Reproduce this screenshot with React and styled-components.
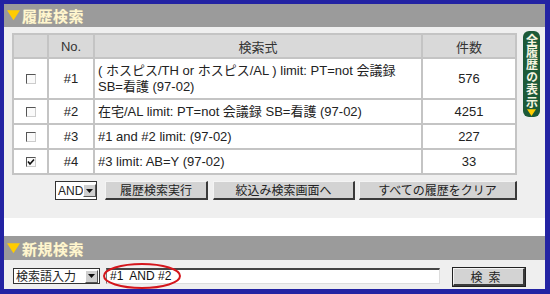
import styled, { createGlobalStyle } from 'styled-components'

const GlobalStyle = createGlobalStyle`
  html, body {
    margin: 0;
    padding: 0;
    background: #ffffff;
  }
  * {
    box-sizing: border-box;
  }
`

const Frame = styled.div`
  width: 550px;
  height: 294px;
  border-style: solid;
  border-color: #2323a3;
  border-width: 4px 5px 5px 4px;
  background: #ffffff;
  display: flex;
  flex-direction: column;
  font-family: "Liberation Sans", "Noto Sans CJK JP", sans-serif;
  font-size: 13px;
  color: #222;
  overflow: hidden;
`

const SectionHeader = styled.div`
  height: ${p => p.$h}px;
  flex: none;
  background: #9b9b9b;
  display: flex;
  align-items: center;
  gap: 2px;
  padding-left: 3px;
  color: #fff6cf;
  font-family: "Noto Sans CJK JP", sans-serif;
  font-weight: 700;
  font-size: 15px;
  letter-spacing: 0.5px;
  text-shadow: 0 0 1px #c9c19a;
`

const HistoryBody = styled.div`
  height: 191px;
  flex: none;
  background: #efefef;
  display: flex;
  padding: 6px 0 0 8px;
`

const Spacer = styled.div`
  height: 18px;
  flex: none;
  background: #ffffff;
`

const TableColumn = styled.div`
  width: 503px;
  display: flex;
  flex-direction: column;
`

const HistoryTable = styled.table`
  width: 503px;
  border-collapse: collapse;
  table-layout: fixed;
  background: #ffffff;
  border: 2px solid #b8b8b8;
`

const HeadCell = styled.th`
  height: 23px;
  background: #d9d9d9;
  border: 2px solid #c4c4c4;
  font-weight: 400;
  font-size: 13px;
  color: #333;
  text-align: center;
  padding: 0;
`

const Cell = styled.td`
  height: ${p => p.$h}px;
  border: 2px solid #c4c4c4;
  padding: ${p => (p.$left ? '0 3px' : '0')};
  text-align: ${p => (p.$left ? 'left' : 'center')};
  vertical-align: middle;
  line-height: 16px;
  color: #222;
`

const Check = styled.span`
  display: inline-block;
  width: 10px;
  height: 10px;
  border-top: 1px solid #555;
  border-left: 1px solid #555;
  border-right: 1px solid #ccc;
  border-bottom: 1px solid #ccc;
  background: #fafafa;
  vertical-align: middle;
  position: relative;
`

const Controls = styled.div`
  display: flex;
  align-items: center;
  margin-top: 6px;
  padding-left: 43px;
  height: 19px;
`

const Select = styled.div`
  width: ${p => p.$w}px;
  height: ${p => p.$h}px;
  background: #ffffff;
  border: 1px solid #333;
  display: flex;
  align-items: center;
  justify-content: space-between;
  padding: 0 1px 0 2px;
  font-size: 12px;
  line-height: 1;
  font-family: "Liberation Sans", "Noto Sans CJK JP", sans-serif;
  margin-right: ${p => p.$mr}px;
  flex: none;
  white-space: nowrap;
`

const Arrow = styled.span`
  width: 13px;
  height: 13px;
  flex: none;
  background: #cfcfcf;
  border-top: 1px solid #fff;
  border-left: 1px solid #fff;
  border-right: 1px solid #555;
  border-bottom: 1px solid #555;
  display: flex;
  align-items: center;
  justify-content: center;
`

const Button = styled.button`
  width: ${p => p.$w}px;
  height: ${p => p.$h || 19}px;
  margin-right: ${p => p.$mr || 0}px;
  flex: none;
  background: #d3d3d3;
  border-style: solid;
  border-width: 1px 2px 2px 1px;
  border-color: #f4f4f4 #3a3a3a #3a3a3a #f4f4f4;
  font-family: "Noto Sans CJK JP", sans-serif;
  font-size: 12px;
  color: #222;
  padding: 0;
  line-height: 1;
  letter-spacing: ${p => p.$ls || 0}px;
  outline: ${p => (p.$framed ? '1px solid #222' : 'none')};
`

const SidePill = styled.div`
  margin: -2px 0 0 8px;
  width: 17px;
  height: 86px;
  border-radius: 6px;
  background: #1c5a38;
  display: flex;
  flex-direction: column;
  align-items: center;
  padding-top: 3px;
  gap: 1px;
`

const PillText = styled.span`
  writing-mode: vertical-rl;
  text-orientation: upright;
  font-family: "Noto Sans CJK JP", sans-serif;
  font-weight: 700;
  font-size: 12px;
  line-height: 12px;
  letter-spacing: 0.4px;
  color: #f4f4e0;
`

const NewBody = styled.div`
  flex: 1;
  background: #efefef;
  display: flex;
  align-items: flex-start;
  padding: 8px 0 0 9px;
`

const InputWrap = styled.div`
  position: relative;
  width: 334px;
  height: 16px;
  margin-right: 13px;
  flex: none;
`

const TextInput = styled.div`
  width: 100%;
  height: 100%;
  background: #ffffff;
  border-top: 2px solid #444;
  border-left: 1px solid #777;
  border-right: 1px solid #ddd;
  border-bottom: 1px solid #ddd;
  font-family: "Liberation Sans", sans-serif;
  font-size: 12px;
  line-height: 13px;
  padding-left: 3px;
  color: #111;
  white-space: pre;
`

const Ellipse = styled.svg`
  position: absolute;
  left: -4px;
  top: -6px;
  pointer-events: none;
`

const Triangle = ({ size = 13 }) => (
  <svg width={size} height={size * 0.8} viewBox="0 0 13 10">
    <polygon points="0,0 13,0 6.5,10" fill="#ffcc00" />
  </svg>
)

const rows = [
  { no: '#1', lines: ['( ホスピス/TH or ホスピス/AL ) limit: PT=not 会議録', 'SB=看護 (97-02)'], count: 576, h: 41 },
  { no: '#2', lines: ['在宅/AL limit: PT=not 会議録 SB=看護 (97-02)'], count: 4251, h: 25 },
  { no: '#3', lines: ['#1 and #2 limit: (97-02)'], count: 227, h: 25 },
  { no: '#4', lines: ['#3 limit: AB=Y (97-02)'], count: 33, h: 25, checked: true },
]

const DownArrow = () => (
  <svg width="7" height="4" viewBox="0 0 7 4">
    <polygon points="0,0 7,0 3.5,4" fill="#111" />
  </svg>
)

export default function App() {
  return (
    <>
      <GlobalStyle />
      <Frame>
        <SectionHeader $h={23}>
          <Triangle />
          <span>履歴検索</span>
        </SectionHeader>
        <HistoryBody>
          <TableColumn>
            <HistoryTable>
              <colgroup>
                <col style={{ width: 35 }} />
                <col style={{ width: 46 }} />
                <col style={{ width: 328 }} />
                <col style={{ width: 94 }} />
              </colgroup>
              <thead>
                <tr>
                  <HeadCell style={{ height: 24 }} />
                  <HeadCell>No.</HeadCell>
                  <HeadCell>検索式</HeadCell>
                  <HeadCell>件数</HeadCell>
                </tr>
              </thead>
              <tbody>
                {rows.map(r => (
                  <tr key={r.no}>
                    <Cell $h={r.h}>
                      <Check>
                        {r.checked && (
                          <svg width="8" height="8" viewBox="0 0 8 8" style={{ position: 'absolute', left: 0, top: 0 }}>
                            <polyline points="1,3.5 3,6 7,1.5" fill="none" stroke="#111" strokeWidth="1.6" />
                          </svg>
                        )}
                      </Check>
                    </Cell>
                    <Cell $h={r.h}>{r.no}</Cell>
                    <Cell $h={r.h} $left>
                      {r.lines.map((l, i) => (
                        <div key={i}>{l}</div>
                      ))}
                    </Cell>
                    <Cell $h={r.h}>{r.count}</Cell>
                  </tr>
                ))}
              </tbody>
            </HistoryTable>
            <Controls>
              <Select $w={42} $h={19} $mr={8}>
                <span>AND</span>
                <Arrow>
                  <DownArrow />
                </Arrow>
              </Select>
              <Button $w={103} $mr={5}>履歴検索実行</Button>
              <Button $w={142} $mr={4}>絞込み検索画面へ</Button>
              <Button $w={158}>すべての履歴をクリア</Button>
            </Controls>
          </TableColumn>
          <SidePill>
            <PillText>全履歴の表示</PillText>
            <Triangle size={9} />
          </SidePill>
        </HistoryBody>
        <Spacer />
        <SectionHeader $h={24}>
          <Triangle />
          <span>新規検索</span>
        </SectionHeader>
        <NewBody>
          <Select $w={87} $h={16} $mr={6}>
            <span style={{ fontFamily: '"Noto Sans CJK JP", sans-serif' }}>検索語入力</span>
            <Arrow>
              <DownArrow />
            </Arrow>
          </Select>
          <InputWrap>
            <TextInput>#1  AND #2</TextInput>
            <Ellipse width="80" height="28" viewBox="0 0 80 28">
              <ellipse cx="40" cy="14" rx="38" ry="12" fill="none" stroke="#d4161c" strokeWidth="2" />
            </Ellipse>
          </InputWrap>
          <Button $w={72} $h={18} $ls={6} $framed>検索</Button>
        </NewBody>
      </Frame>
    </>
  )
}
